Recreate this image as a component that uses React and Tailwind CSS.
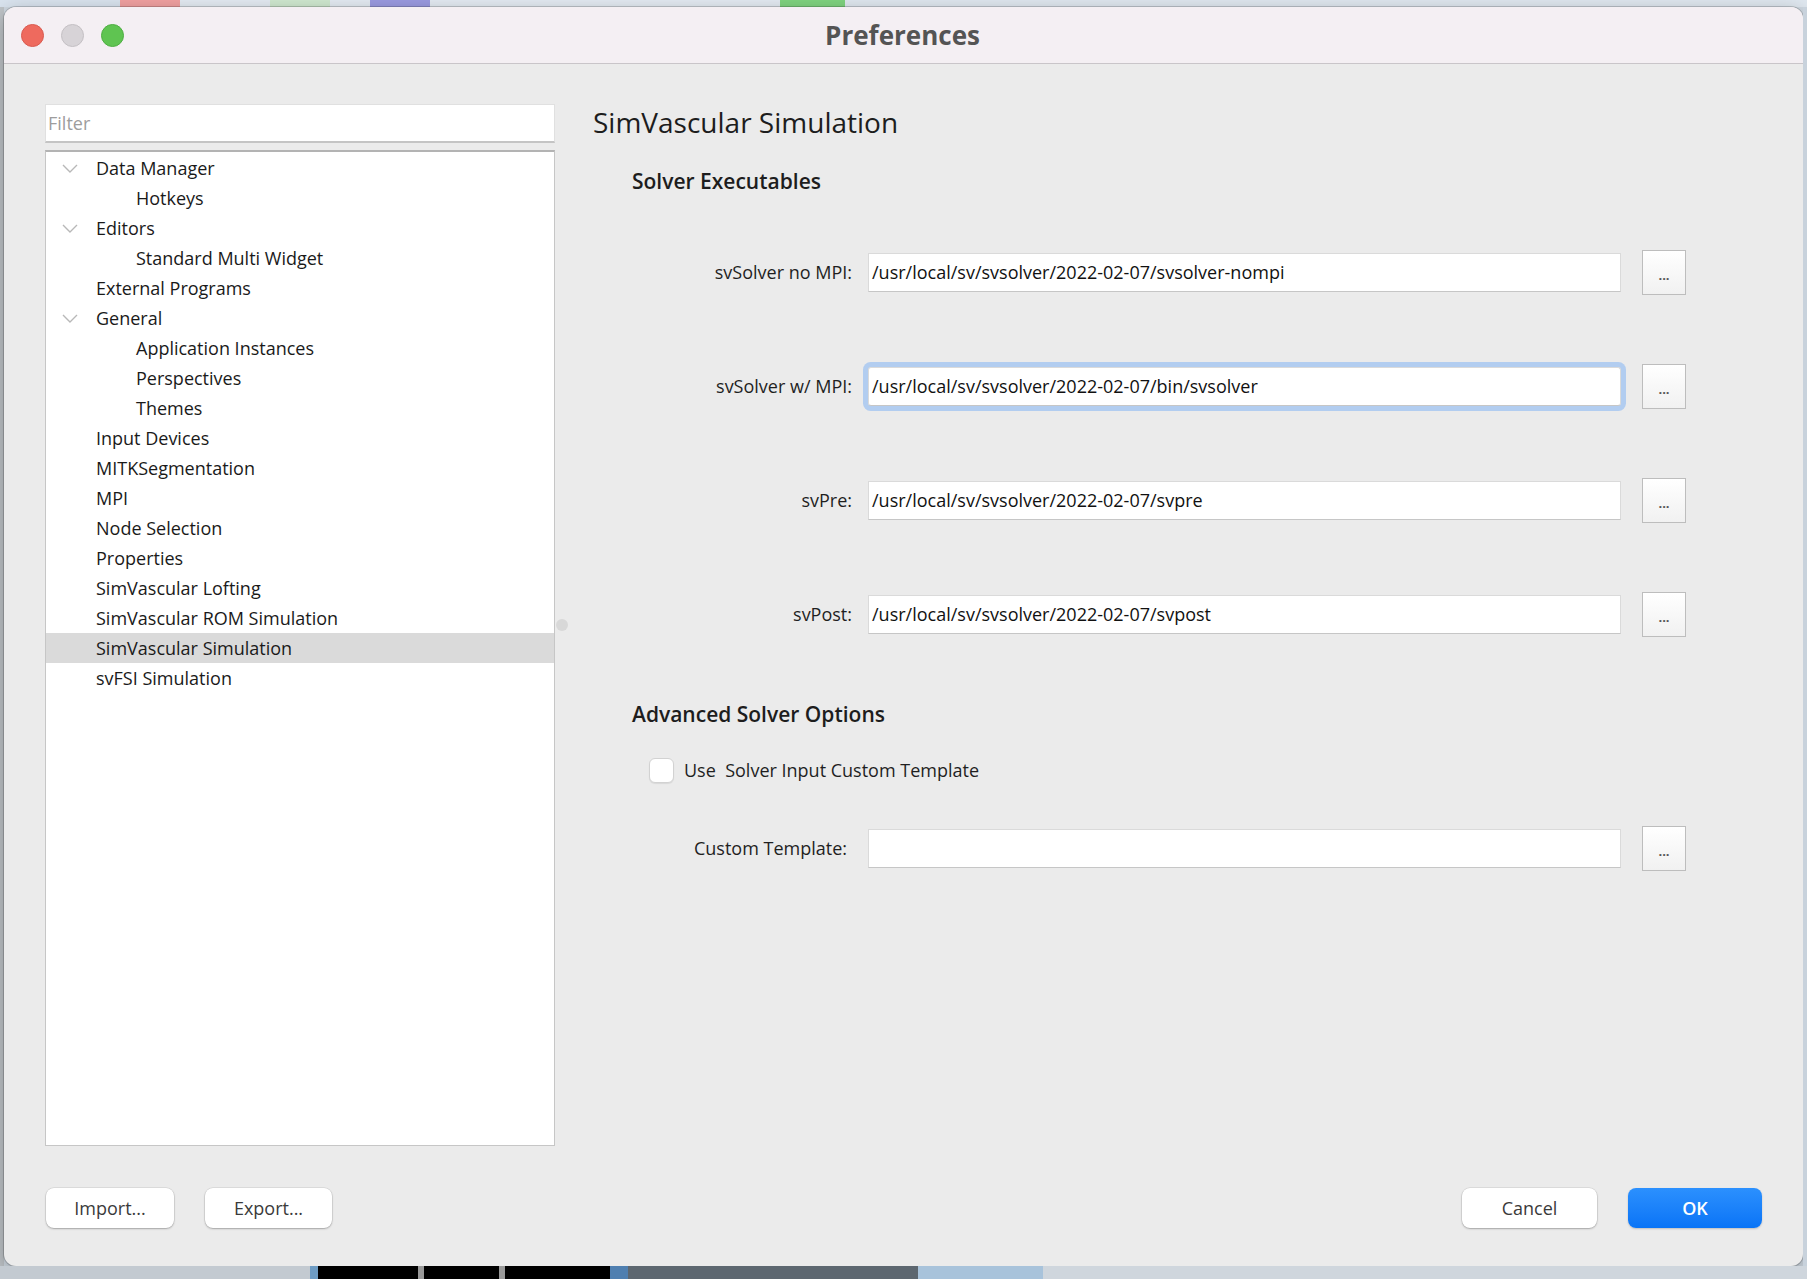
import React from 'react'

const FONT = "font-['Open_Sans','DejaVu_Sans',sans-serif]"

const tree = [
  { label: 'Data Manager', level: 0, open: true },
  { label: 'Hotkeys', level: 1 },
  { label: 'Editors', level: 0, open: true },
  { label: 'Standard Multi Widget', level: 1 },
  { label: 'External Programs', level: 0 },
  { label: 'General', level: 0, open: true },
  { label: 'Application Instances', level: 1 },
  { label: 'Perspectives', level: 1 },
  { label: 'Themes', level: 1 },
  { label: 'Input Devices', level: 0 },
  { label: 'MITKSegmentation', level: 0 },
  { label: 'MPI', level: 0 },
  { label: 'Node Selection', level: 0 },
  { label: 'Properties', level: 0 },
  { label: 'SimVascular Lofting', level: 0 },
  { label: 'SimVascular ROM Simulation', level: 0 },
  { label: 'SimVascular Simulation', level: 0, selected: true },
  { label: 'svFSI Simulation', level: 0 },
]

const solvers = [
  { label: 'svSolver no MPI:', value: '/usr/local/sv/svsolver/2022-02-07/svsolver-nompi' },
  { label: 'svSolver w/ MPI:', value: '/usr/local/sv/svsolver/2022-02-07/bin/svsolver', focused: true },
  { label: 'svPre:', value: '/usr/local/sv/svsolver/2022-02-07/svpre' },
  { label: 'svPost:', value: '/usr/local/sv/svsolver/2022-02-07/svpost' },
]

function Chevron() {
  return (
    <svg width="16" height="9" viewBox="0 0 16 9" fill="none">
      <polyline points="1,1 8,8 15,1" stroke="#b8b8b8" strokeWidth="1.4" />
    </svg>
  )
}

function TreeRow({ item }) {
  return (
    <div className={`flex items-center h-[30px] ${item.selected ? 'bg-[#dadada]' : ''}`}>
      <div className={`${item.level ? 'w-[90px]' : 'w-[50px]'} shrink-0 pl-[16px] flex items-center`}>
        {item.open && <Chevron />}
      </div>
      <span className="text-[18px] leading-[30px] text-[#1a1a1a] whitespace-nowrap">{item.label}</span>
    </div>
  )
}

function Browse() {
  return (
    <button className="w-[44px] h-[45px] shrink-0 border border-[#bdbdbd] bg-gradient-to-b from-white to-[#f1f1f1] text-[#555] text-[13px] leading-none pt-[6px] font-bold">
      ...
    </button>
  )
}

function PathRow({ label, value, focused, labelPad = '' }) {
  return (
    <div className="flex items-center h-[45px]">
      <div className={`w-[259px] shrink-0 text-right text-[18px] text-[#1f1f1f] ${labelPad}`}>{label}</div>
      <div
        className={`ml-[16px] w-[753px] h-[39px] bg-white flex items-center px-[3px] text-[18px] text-[#111] whitespace-nowrap border border-[#dadada] border-b-[#c6c6c6] ${
          focused ? 'ring-[5px] ring-[#b2cdf0] rounded-[3px]' : ''
        }`}
      >
        {value}
      </div>
      <div className="ml-[21px]">
        <Browse />
      </div>
    </div>
  )
}

function FooterButton({ children, className = '', primary = false }) {
  return (
    <button
      className={`h-[40px] rounded-[8px] text-[18px] font-medium ${
        primary
          ? 'bg-gradient-to-b from-[#2b90fe] to-[#0874f6] text-white font-semibold shadow-[0_1px_2px_rgba(0,0,0,0.2)]'
          : 'bg-white text-[#3a3a3a] shadow-[0_0_0_0.5px_rgba(0,0,0,0.12),0_1px_2px_rgba(0,0,0,0.25)]'
      } ${className}`}
    >
      {children}
    </button>
  )
}

export default function App() {
  return (
    <div className={`w-[1807px] h-[1279px] flex flex-col overflow-hidden bg-[#cfd8e1] ${FONT}`}>
      {/* desktop strip above */}
      <div className="h-[7px] flex shrink-0">
        <div className="w-[120px] bg-[#d9e3ee]" />
        <div className="w-[60px] bg-[#f0a0a0]" />
        <div className="w-[90px] bg-[#e3eaf2]" />
        <div className="w-[60px] bg-[#cfe8cf]" />
        <div className="w-[40px] bg-[#e3eaf2]" />
        <div className="w-[60px] bg-[#9a9ae0]" />
        <div className="w-[350px] bg-[#e3eaf2]" />
        <div className="w-[65px] bg-[#7fd37f]" />
        <div className="flex-1 bg-[#dfe7ef]" />
      </div>

      <div className="flex flex-1 min-h-0">
        <div className="w-[4px] bg-[#bfc4c8]" />

        {/* window */}
        <div className="w-[1799px] h-[1259px] rounded-[12px] overflow-hidden bg-[#ebebeb] flex flex-col shadow-[0_0_0_1px_rgba(0,0,0,0.18),0_6px_20px_rgba(0,0,0,0.3)]">
          {/* title bar */}
          <div className="h-[57px] shrink-0 bg-[#f4eff3] border-b border-[#c9c5c9] grid grid-cols-[1fr_auto_1fr] items-center">
            <div className="flex items-center gap-[17px] pl-[17px]">
              <span className="w-[23px] h-[23px] rounded-full bg-[#ee6a5e] border border-[#d95a4f]" />
              <span className="w-[23px] h-[23px] rounded-full bg-[#d7d3d7] border border-[#c4c0c4]" />
              <span className="w-[23px] h-[23px] rounded-full bg-[#5fc451] border border-[#4eae42]" />
            </div>
            <div className="text-[26px] font-bold text-[#545454] leading-none pr-[2px]">Preferences</div>
            <div />
          </div>

          {/* main */}
          <div className="flex-1 min-h-0 flex pl-[41px] pt-[40px]">
            {/* left column */}
            <div className="w-[510px] shrink-0 flex flex-col">
              <input
                placeholder="Filter"
                className="h-[39px] bg-white px-[2px] text-[18px] text-[#222] placeholder:text-[#9d9d9d] outline-none border border-[#e0e0e0] border-b-[#c4c4c4] border-b-2"
              />
              <div className="mt-[7px] flex-1 bg-white border border-[#c6c6c6] border-t-2 border-t-[#b3b3b3] pt-[1px]">
                {tree.map((item) => (
                  <TreeRow key={item.label} item={item} />
                ))}
              </div>
            </div>

            {/* splitter */}
            <div className="w-[38px] shrink-0 pt-[515px] pl-[1px]">
              <div className="w-[12px] h-[12px] rounded-full bg-[#d8d8d8]" />
            </div>

            {/* right column */}
            <div className="flex-1 flex flex-col -mt-[1px]">
              <h1 className="text-[28px] leading-[38px] text-[#1d1d1d]">SimVascular Simulation</h1>

              <h2 className="mt-[25px] ml-[39px] text-[21px] leading-[30px] font-semibold text-[#1d1d1d]">
                Solver Executables
              </h2>

              <div className="mt-[54px] flex flex-col gap-[69px]">
                {solvers.map((s) => (
                  <PathRow key={s.label} {...s} />
                ))}
              </div>

              <h2 className="mt-[62px] ml-[39px] text-[21px] leading-[30px] font-semibold text-[#1d1d1d]">
                Advanced Solver Options
              </h2>

              <div className="mt-[26px] h-[30px] ml-[56px] flex items-center">
                <span className="w-[25px] h-[25px] rounded-[6px] bg-white border border-[#d2d2d2] shadow-[0_1px_1px_rgba(0,0,0,0.08)]" />
                <span className="ml-[10px] text-[18px] text-[#1f1f1f] whitespace-pre">Use  Solver Input Custom Template</span>
              </div>

              <div className="mt-[41px]">
                <PathRow label="Custom Template:" value="" labelPad="pr-[5px]" />
              </div>
            </div>
          </div>

          {/* footer */}
          <div className="shrink-0 h-[120px] pt-[42px] px-[41px] flex justify-between items-start">
            <div className="flex gap-[31px] pl-[1px]">
              <FooterButton className="w-[128px]">Import...</FooterButton>
              <FooterButton className="w-[127px]">Export...</FooterButton>
            </div>
            <div className="flex gap-[31px]">
              <FooterButton className="w-[135px]">Cancel</FooterButton>
              <FooterButton primary className="w-[134px]">OK</FooterButton>
            </div>
          </div>
        </div>

        <div className="flex-1 bg-[#c8d2dc]" />
      </div>

      {/* desktop strip below */}
      <div className="h-[13px] flex shrink-0">
        <div className="w-[310px] bg-[#c3cad1]" />
        <div className="w-[8px] bg-[#6e9cc4]" />
        <div className="w-[100px] bg-black" />
        <div className="w-[6px] bg-[#999]" />
        <div className="w-[75px] bg-black" />
        <div className="w-[6px] bg-[#999]" />
        <div className="w-[105px] bg-black" />
        <div className="w-[18px] bg-[#4f7fb0]" />
        <div className="w-[290px] bg-[#5d6770]" />
        <div className="w-[125px] bg-[#a8c3db]" />
        <div className="flex-1 bg-[#cfd6dd]" />
      </div>
    </div>
  )
}
